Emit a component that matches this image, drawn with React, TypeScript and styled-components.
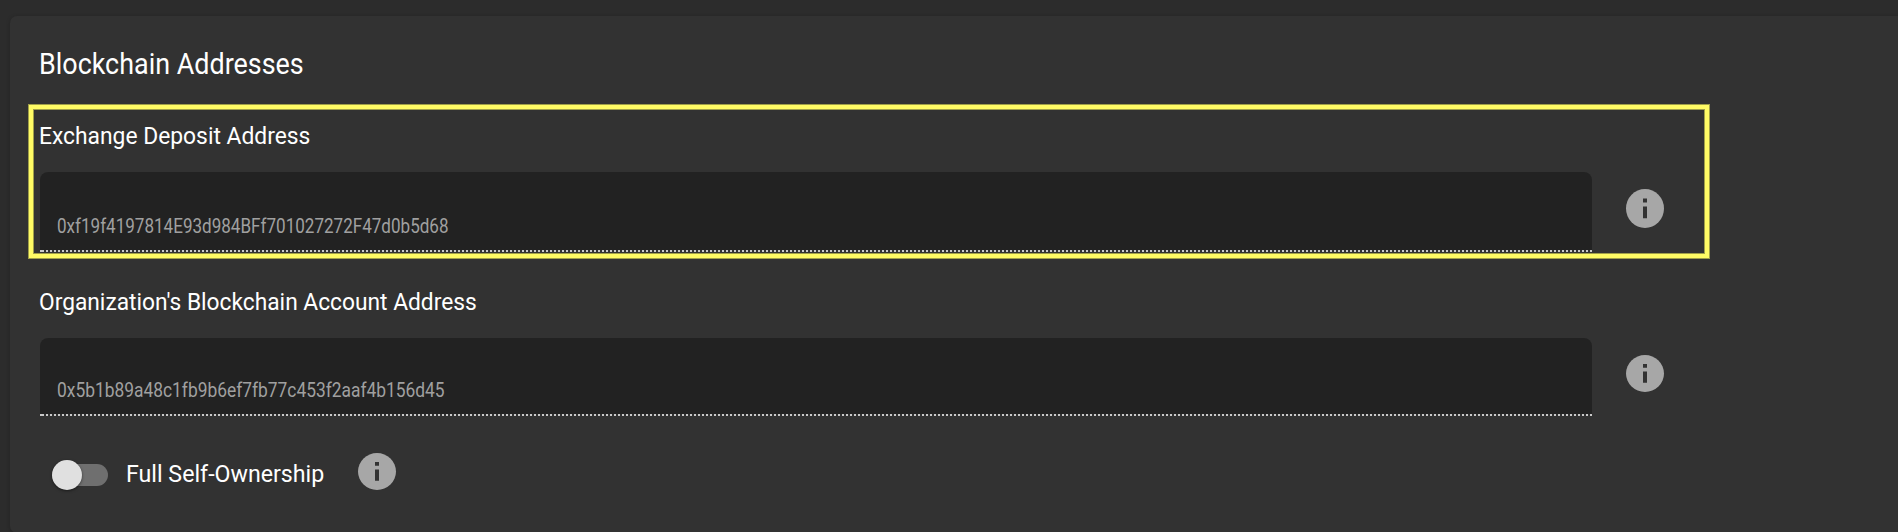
import React from 'react';
import styled, { createGlobalStyle } from 'styled-components';

const GlobalStyle = createGlobalStyle`
  html, body { margin: 0; height: 100%; overflow: hidden; background: #2c2c2c; }
  * { box-sizing: border-box; }
`;

const Page = styled.main`
  height: 532px;
  padding: 16px 0 0 10px;
  overflow: hidden;
  background: #2c2c2c;
  color: #fff;
  font-family: Roboto, "Liberation Sans", sans-serif;
`;

const Panel = styled.section`
  height: 517px;
  padding: 28px 0 0 18px;
  border-radius: 7px 0 0 7px;
  background: #323232;
  box-shadow: 0 1px 4px rgba(0, 0, 0, 0.22);
`;

const Text = styled.span<{ $squeeze: number }>`
  display: inline-block;
  white-space: nowrap;
  transform: scaleX(${(p) => p.$squeeze});
  transform-origin: left center;
`;

const Title = styled.h2`
  height: 60px;
  margin: 0;
  padding-left: 11px;
  font-size: 29px;
  font-weight: 400;
  line-height: 40px;
`;

const Group = styled.div<{ $active?: boolean }>`
  width: 1682px;
  height: ${(p) => (p.$active ? 155 : 157)}px;
  padding: 15px 6px 0 12px;
  ${(p) => p.$active && `
    padding: 15px 5px 0 11px;
    border: 1px solid #a09f49;
    box-shadow: inset 0 0 0 4px #fffb65, inset 0 0 0 5px #a09f49;
  `}
`;

const Label = styled.h3<{ $height: number; $top?: number }>`
  height: ${(p) => p.$height}px;
  margin: 0 0 0 -1px;
  padding-top: ${(p) => p.$top ?? 0}px;
  font-size: 24px;
  font-weight: 400;
  line-height: 32px;
`;

const FieldRow = styled.div`
  display: flex;
  align-items: flex-start;
`;

const Field = styled.div<{ $height: number }>`
  display: flex;
  flex-direction: column;
  justify-content: space-between;
  width: 1552px;
  height: ${(p) => p.$height}px;
  border-radius: 8px 8px 0 0;
  background: linear-gradient(#222, #222) top / 100% calc(100% - 2px) no-repeat;
`;

const Value = styled.div<{ $top: number }>`
  padding: ${(p) => p.$top}px 0 0 17px;
  color: #a0a0a0;
  font-size: 20px;
  line-height: 24px;
`;

const Dots = styled.div`
  height: 2px;
  background:
    linear-gradient(#c9c9c9, #c9c9c9) left / 4px 2px no-repeat,
    repeating-linear-gradient(90deg, transparent 0 2px, #c9c9c9 2px 4px);
`;

const IconSlot = styled.div<{ $top: number; $left: number }>`
  padding: ${(p) => p.$top}px 0 0 ${(p) => p.$left}px;
  line-height: 0;
`;

const ToggleRow = styled.div`
  display: flex;
  height: 50px;
  margin-top: 35px;
  padding-left: 24px;
`;

const Track = styled.div`
  width: 56px;
  height: 22px;
  margin-top: 13px;
  border-radius: 11px;
  background: #6f6f6f;
`;

const Knob = styled.div`
  width: 30px;
  height: 30px;
  border-radius: 50%;
  background: #e0e0e0;
  box-shadow: 0 1px 3px rgba(0, 0, 0, 0.5);
  transform: translateY(-4px);
`;

const ToggleLabel = styled.div`
  width: 230px;
  padding: 7px 0 0 18px;
  font-size: 24px;
  line-height: 32px;
`;

const InfoIcon = ({ height = 37 }: { height?: number }) => (
  <svg width="39" height={height} viewBox="0 0 39 39" preserveAspectRatio="none">
    <ellipse cx="19" cy="19.5" rx="19" ry="19.5" fill="#a7a7a7" />
    <path d="M17 9.5h4v4h-4zM17 17.5h4v11.7h-4z" fill="#323232" />
  </svg>
);

export default function App() {
  return (
    <>
      <GlobalStyle />
      <Page>
        <Panel>
          <Title><Text $squeeze={0.928}>Blockchain Addresses</Text></Title>
          <Group $active>
            <Label $height={52}><Text $squeeze={0.951}>Exchange Deposit Address</Text></Label>
            <FieldRow>
              <Field $height={80}>
                <Value $top={42}><Text $squeeze={0.853}>0xf19f4197814E93d984BFf701027272F47d0b5d68</Text></Value>
                <Dots />
              </Field>
              <IconSlot $top={17} $left={34}><InfoIcon height={39} /></IconSlot>
            </FieldRow>
          </Group>
          <Group>
            <Label $height={64} $top={12}><Text $squeeze={0.948}>Organization's Blockchain Account Address</Text></Label>
            <FieldRow>
              <Field $height={78}>
                <Value $top={40}><Text $squeeze={0.869}>0x5b1b89a48c1fb9b6ef7fb77c453f2aaf4b156d45</Text></Value>
                <Dots />
              </Field>
              <IconSlot $top={17} $left={34}><InfoIcon /></IconSlot>
            </FieldRow>
          </Group>
          <ToggleRow>
            <Track><Knob /></Track>
            <ToggleLabel><Text $squeeze={0.966}>Full Self-Ownership</Text></ToggleLabel>
            <IconSlot $top={2} $left={20}><InfoIcon /></IconSlot>
          </ToggleRow>
        </Panel>
      </Page>
    </>
  );
}
